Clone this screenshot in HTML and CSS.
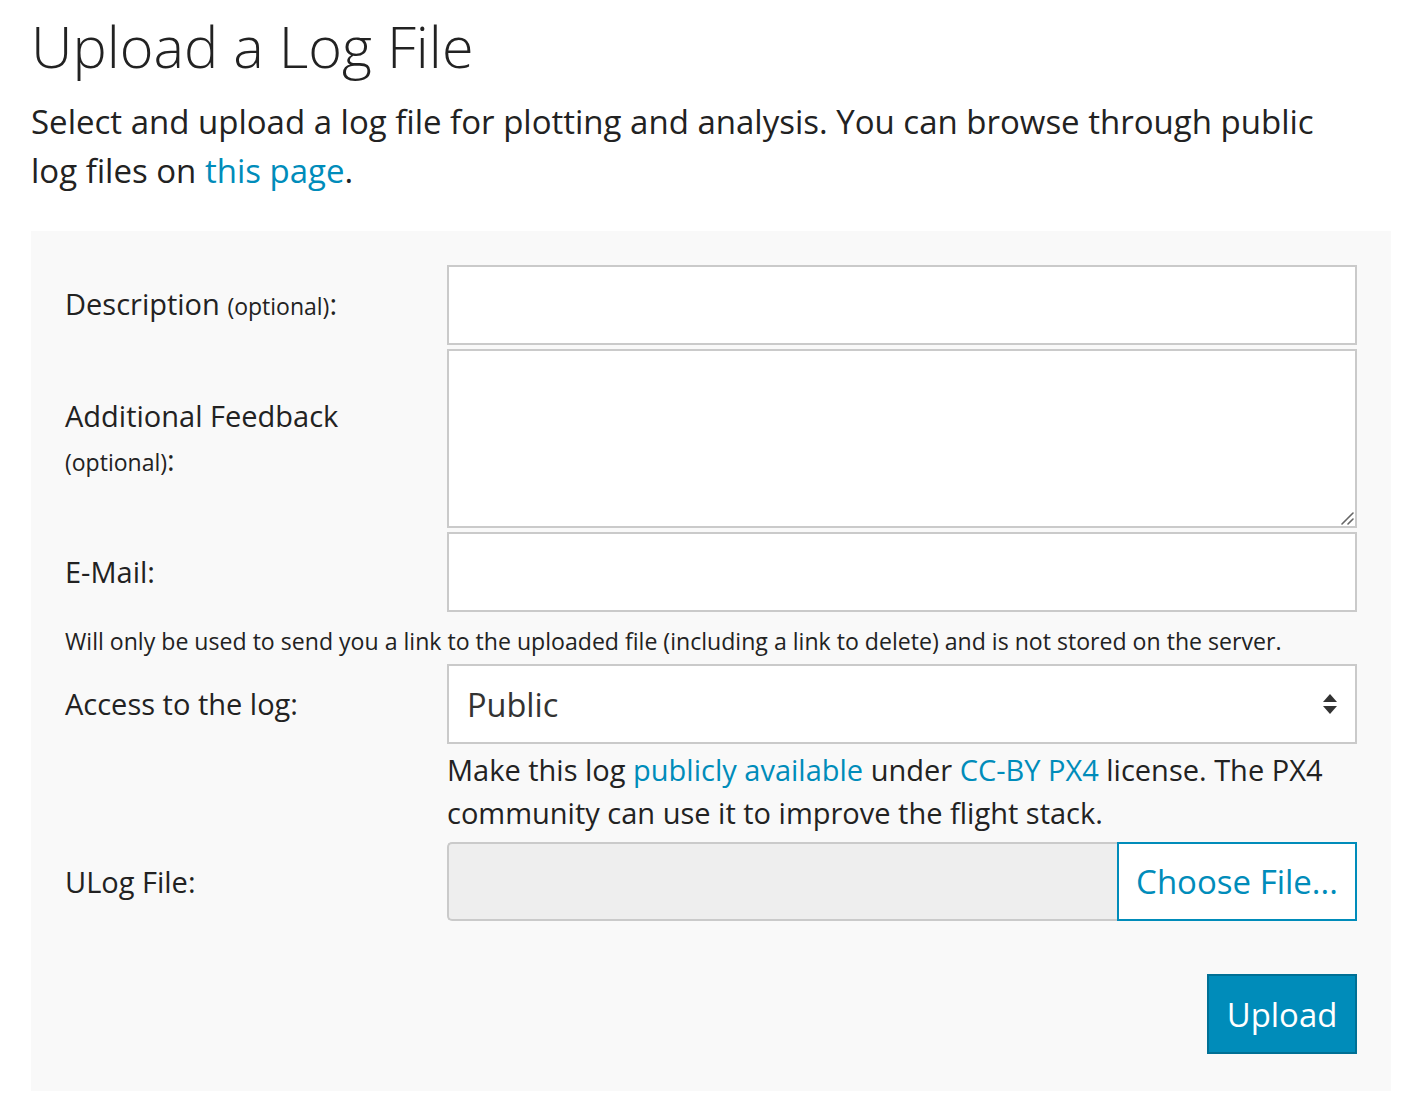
FILE: index.html
```html
<!DOCTYPE html>
<html>
<head>
<meta charset="utf-8">
<link rel="stylesheet" href="styles.css">
</head>
<body>
<div class="page">
  <h1 class="title">Upload a Log File</h1>
  <p class="intro">Select and upload a log file for plotting and analysis. You can browse through public log files on <a href="#">this page</a>.</p>
  <form class="panel">
    <div class="row">
      <label class="lbl">Description <small>(optional)</small>:</label>
      <input class="field" type="text">
    </div>
    <div class="row">
      <label class="lbl">Additional Feedback <small>(optional)</small>:</label>
      <div class="ta-wrap">
        <textarea class="field area"></textarea>
        <svg class="grip" width="14" height="14" viewBox="0 0 14 14"><path d="M2 13 L13 2 M8 13 L13 8" stroke="#666" stroke-width="1.6" stroke-linecap="round"/></svg>
      </div>
    </div>
    <div class="row">
      <label class="lbl">E-Mail:</label>
      <input class="field" type="text">
    </div>
    <p class="note">Will only be used to send you a link to the uploaded file (including a link to delete) and is not stored on the server.</p>
    <div class="row">
      <label class="lbl">Access to the log:</label>
      <div class="select">
        <span>Public</span>
        <svg class="arrows" width="16" height="22" viewBox="0 0 16 22"><path d="M8 1 L15 9 L1 9 Z M1 13 L15 13 L8 21 Z" fill="#333"/></svg>
      </div>
    </div>
    <div class="row top">
      <div></div>
      <p class="help">Make this log <a href="#">publicly available</a> under <a href="#">CC-BY PX4</a> license. The PX4 community can use it to improve the flight stack.</p>
    </div>
    <div class="row">
      <label class="lbl">ULog File:</label>
      <div class="file">
        <div class="file-name"></div>
        <div class="file-btn">Choose File...</div>
      </div>
    </div>
    <div class="actions">
      <button class="upload" type="button">Upload</button>
    </div>
  </form>
</div>
</body>
</html>
```

FILE: styles.css
```css
html, body {
  margin: 0;
  padding: 0;
  background: #fff;
}
body {
  font-family: "Open Sans", "Liberation Sans", sans-serif;
  color: #222;
}
a {
  color: #008cba;
  text-decoration: none;
}
.page {
  padding: 0 31px;
  width: 1360px;
}
.title {
  font-weight: 300;
  font-size: 57.6px;
  line-height: 72px;
  margin: 10px 0 0 0;
  color: #222;
}
.intro {
  font-size: 33px;
  line-height: 49px;
  margin: 15px 0 36px 0;
  width: 1320px;
}
.panel {
  background: #f9f9f9;
  padding: 34px 34px 38px 34px;
  height: 860px;
  box-sizing: border-box;
}
.row {
  display: grid;
  grid-template-columns: 382px 910px;
  align-items: center;
  margin-bottom: 4px;
}
.row.top {
  align-items: start;
}
.lbl {
  font-size: 29px;
  line-height: 44px;
  color: #222;
}
.lbl small {
  font-size: 23px;
}
.field {
  display: block;
  box-sizing: border-box;
  width: 910px;
  height: 80px;
  border: 2px solid #cacaca;
  background: #fff;
  margin: 0;
  padding: 0 20px;
  font-family: inherit;
  font-size: 30px;
  outline: none;
}
.ta-wrap {
  position: relative;
}
.area {
  height: 179px;
  resize: none;
}
.grip {
  position: absolute;
  right: 3px;
  bottom: 3px;
}
.note {
  font-size: 23.1px;
  line-height: 42px;
  margin: 8px 0 2px 0;
}
.select {
  box-sizing: border-box;
  height: 80px;
  border: 2px solid #cacaca;
  background: #fff;
  display: flex;
  align-items: center;
  justify-content: space-between;
  padding: 0 17px 0 18px;
  font-size: 32.5px;
  color: #333;
}
.help {
  font-size: 29px;
  line-height: 43px;
  margin: 0 0 4px 0;
  color: #222;
}
.file {
  display: flex;
  height: 79px;
}
.file-name {
  flex: 1;
  background: #eee;
  border: 2px solid #cacaca;
  border-right: none;
  border-radius: 5px 0 0 5px;
}
.file-btn {
  box-sizing: border-box;
  width: 240px;
  border: 2px solid #008cba;
  background: #fff;
  color: #008cba;
  font-size: 33px;
  display: flex;
  align-items: center;
  justify-content: center;
}
.actions {
  display: flex;
  justify-content: flex-end;
  margin-top: 53px;
}
.upload {
  box-sizing: border-box;
  width: 150px;
  height: 80px;
  background: #008cba;
  border: 2px solid #007095;
  color: #fff;
  font-family: inherit;
  font-size: 32.9px;
  padding: 0;
}
```
